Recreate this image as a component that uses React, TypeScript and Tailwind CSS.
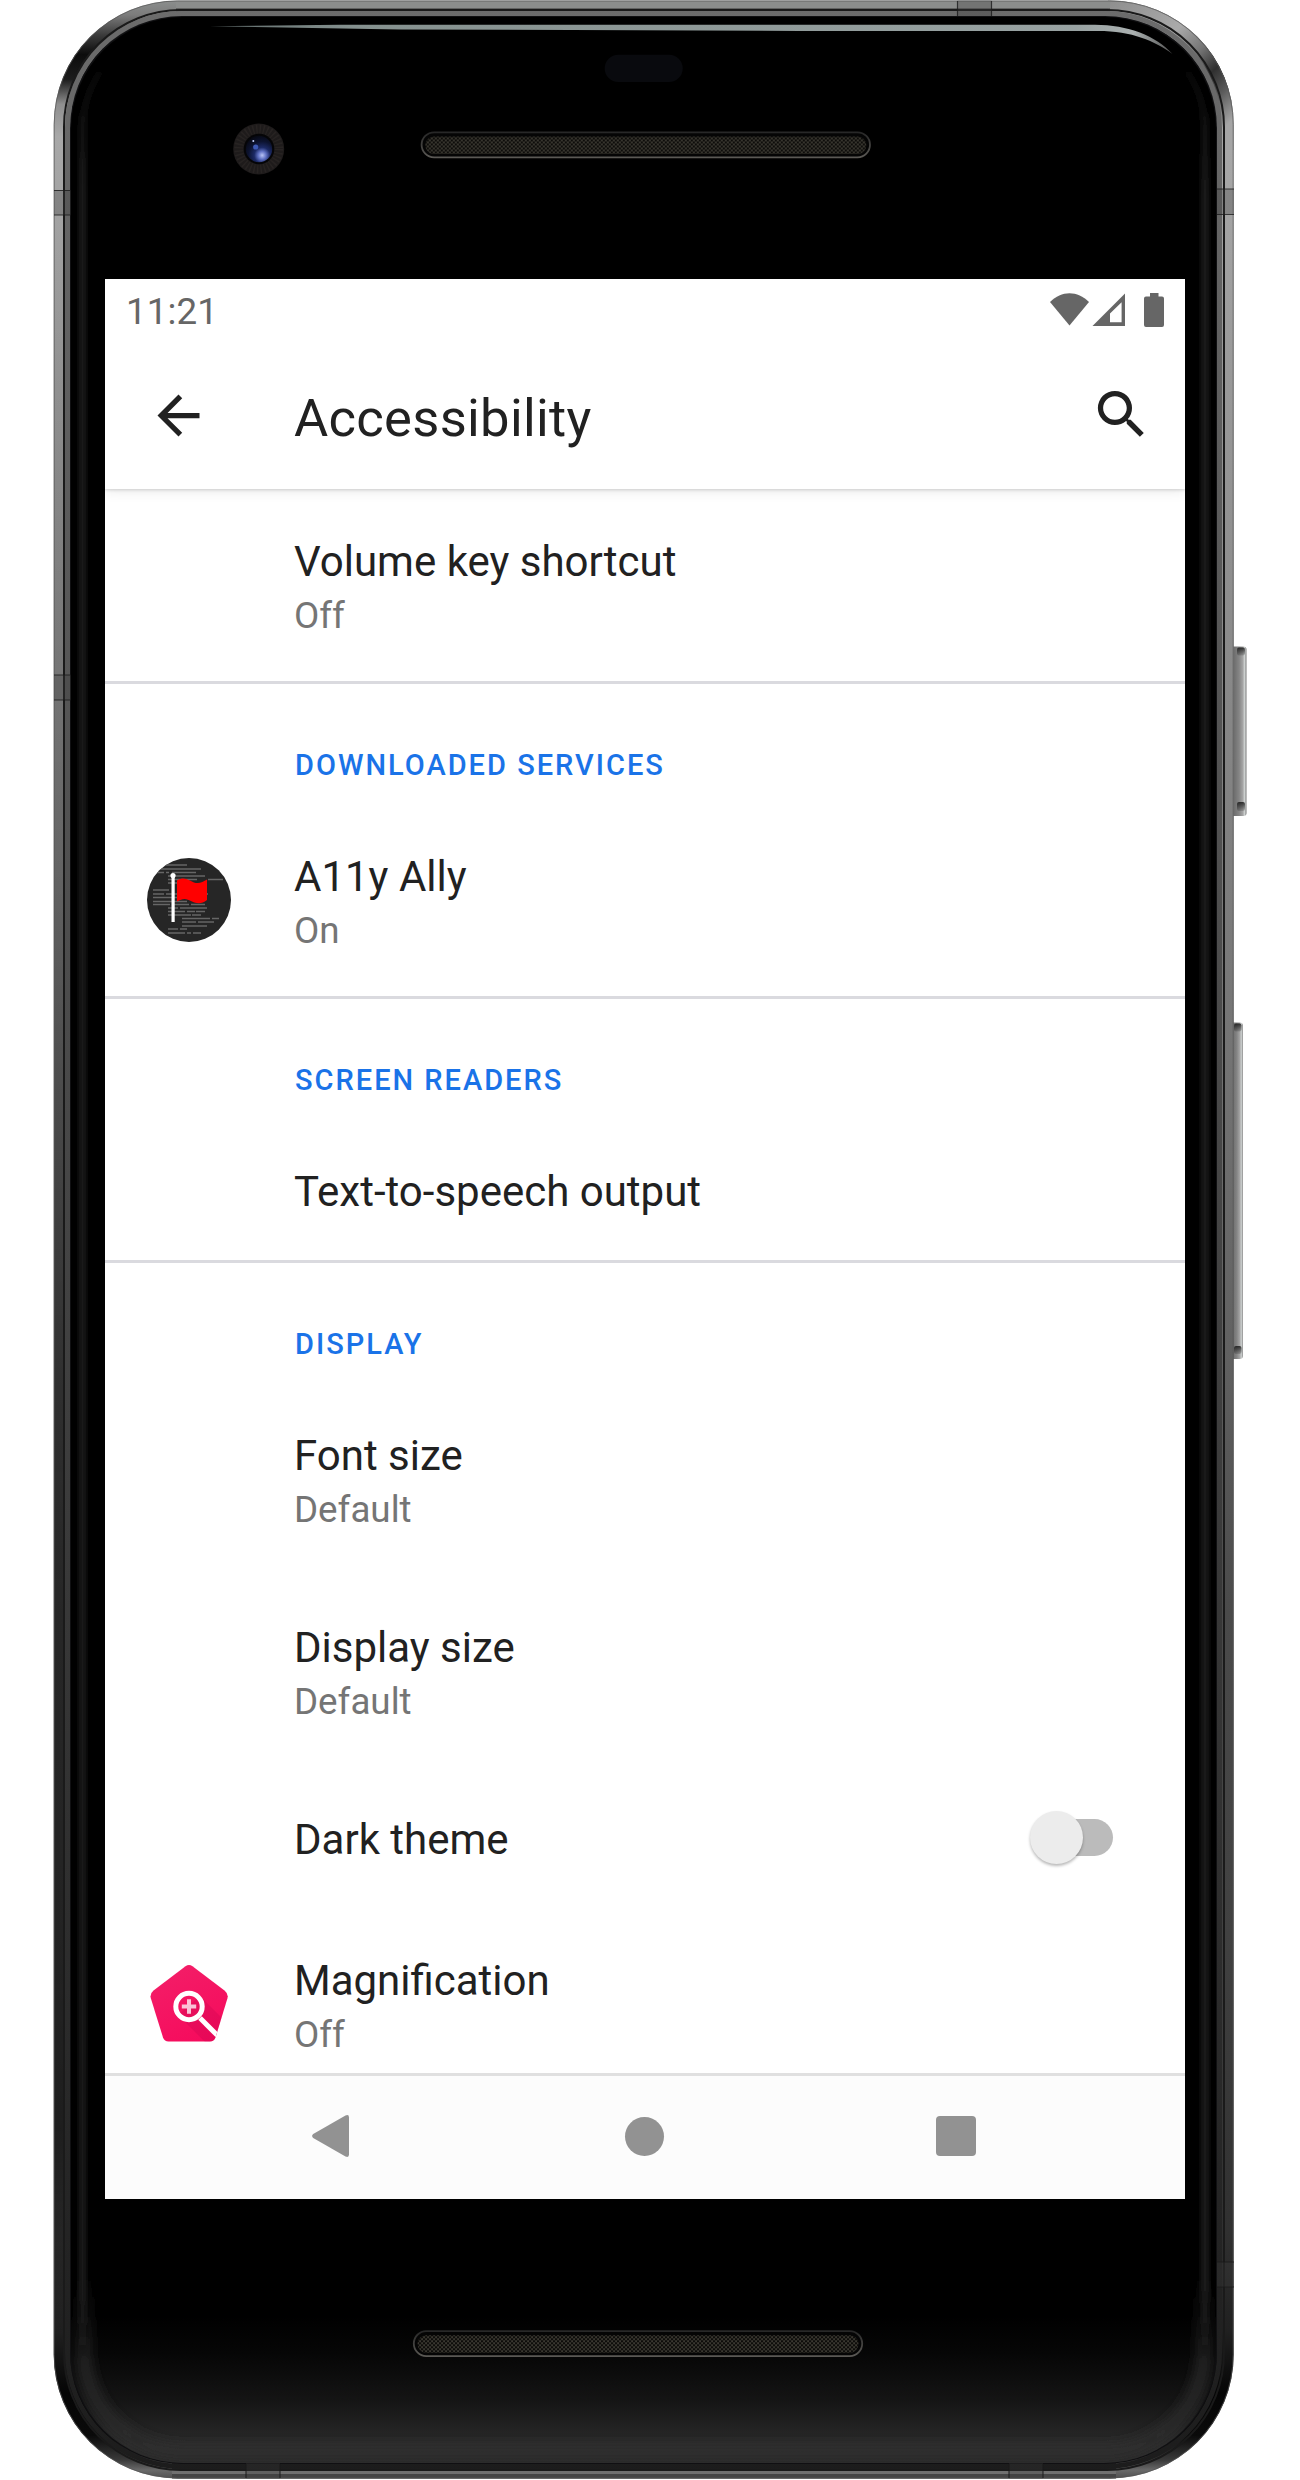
import React from "react";

const FONT = "font-[Roboto,'Liberation_Sans',sans-serif]";

function SpeakerGrille({ x, y }: { x: number; y: number }) {
  return (
    <g transform={`translate(${x} ${y})`}>
      <rect x="0.8" y="0.8" width="448.4" height="25" rx="12.5" fill="#050505" stroke="url(#grilleRim)" strokeWidth="1.8" />
      <rect x="4.5" y="5" width="441" height="17.5" rx="8.7" fill="url(#mesh)" />
    </g>
  );
}

function PhoneFrame() {
  return (
    <svg className="absolute inset-0" width="1300" height="2480" viewBox="0 0 1300 2480" aria-hidden="true">
      <defs>
        <linearGradient id="sideMetal" x1="0" y1="0" x2="0" y2="2480" gradientUnits="userSpaceOnUse">
          <stop offset="0" stopColor="#8c8f8e" />
          <stop offset="0.006" stopColor="#7c7c7c" />
          <stop offset="0.014" stopColor="#3c3c3c" />
          <stop offset="0.022" stopColor="#0c0c0c" />
          <stop offset="0.032" stopColor="#1c1c1c" />
          <stop offset="0.042" stopColor="#8f8f8f" />
          <stop offset="0.055" stopColor="#a8a8a8" />
          <stop offset="0.15" stopColor="#999" />
          <stop offset="0.3" stopColor="#858585" />
          <stop offset="0.45" stopColor="#707070" />
          <stop offset="0.55" stopColor="#606060" />
          <stop offset="0.65" stopColor="#4a4a4a" />
          <stop offset="0.78" stopColor="#414141" />
          <stop offset="0.9" stopColor="#303030" />
          <stop offset="0.94" stopColor="#202020" />
          <stop offset="0.965" stopColor="#050505" />
          <stop offset="0.982" stopColor="#0a0a0a" />
          <stop offset="0.992" stopColor="#3a3a3a" />
          <stop offset="0.996" stopColor="#6a6a6a" />
          <stop offset="1" stopColor="#4b4b4b" />
        </linearGradient>
        <linearGradient id="leftShade" x1="0" y1="220" x2="0" y2="2340" gradientUnits="userSpaceOnUse">
          <stop offset="0" stopColor="#000" stopOpacity="0" />
          <stop offset="0.3" stopColor="#000" stopOpacity="0.2" />
          <stop offset="0.55" stopColor="#000" stopOpacity="0.5" />
          <stop offset="0.9" stopColor="#000" stopOpacity="0.45" />
          <stop offset="1" stopColor="#000" stopOpacity="0" />
        </linearGradient>
        <linearGradient id="rightCorner" x1="1110" y1="0" x2="1232" y2="120" gradientUnits="userSpaceOnUse">
          <stop offset="0" stopColor="#8e8e8e" />
          <stop offset="0.4" stopColor="#aaaaaa" />
          <stop offset="0.58" stopColor="#757575" />
          <stop offset="0.72" stopColor="#303030" />
          <stop offset="0.85" stopColor="#5c5c5c" />
          <stop offset="1" stopColor="#a5a5a5" />
        </linearGradient>
        <linearGradient id="innerRim" x1="0" y1="0" x2="0" y2="2480" gradientUnits="userSpaceOnUse">
          <stop offset="0" stopColor="#6c6c6c" />
          <stop offset="0.25" stopColor="#585858" />
          <stop offset="0.5" stopColor="#444" />
          <stop offset="0.75" stopColor="#303030" />
          <stop offset="1" stopColor="#1c1c1c" />
        </linearGradient>
        <linearGradient id="glass" x1="0" y1="17" x2="0" y2="2463" gradientUnits="userSpaceOnUse">
          <stop offset="0" stopColor="#000" />
          <stop offset="0.94" stopColor="#000" />
          <stop offset="0.955" stopColor="#060606" />
          <stop offset="0.975" stopColor="#151515" />
          <stop offset="0.993" stopColor="#2b2b2b" />
          <stop offset="1" stopColor="#292929" />
        </linearGradient>
        <linearGradient id="sheenFade" x1="0" y1="0" x2="0" y2="2480" gradientUnits="userSpaceOnUse">
          <stop offset="0.02" stopColor="#1f1f1f" stopOpacity="0" />
          <stop offset="0.08" stopColor="#1f1f1f" />
          <stop offset="0.92" stopColor="#1f1f1f" />
          <stop offset="0.95" stopColor="#1f1f1f" stopOpacity="0" />
        </linearGradient>
        <linearGradient id="footGlow" x1="0" y1="2270" x2="0" y2="2452" gradientUnits="userSpaceOnUse">
          <stop offset="0" stopColor="#2d2d2d" stopOpacity="0" />
          <stop offset="0.5" stopColor="#2d2d2d" stopOpacity="0.7" />
          <stop offset="1" stopColor="#2d2d2d" stopOpacity="0.85" />
        </linearGradient>
        <linearGradient id="topGlint" x1="210" y1="0" x2="1172" y2="0" gradientUnits="userSpaceOnUse">
          <stop offset="0" stopColor="#5f6b6b" />
          <stop offset="0.15" stopColor="#85918f" />
          <stop offset="0.9" stopColor="#98a2a2" />
          <stop offset="0.96" stopColor="#aab0b0" />
          <stop offset="1" stopColor="#555" />
        </linearGradient>
        <linearGradient id="grilleRim" x1="0" y1="0" x2="0" y2="1">
          <stop offset="0" stopColor="#272727" />
          <stop offset="1" stopColor="#5b5955" />
        </linearGradient>
        <pattern id="mesh" width="4" height="4" patternUnits="userSpaceOnUse">
          <rect width="4" height="4" fill="#0d0c0a" />
          <rect x="0.3" y="0.2" width="1.5" height="1.5" fill="#5a564c" />
          <rect x="2.3" y="2.2" width="1.5" height="1.5" fill="#5a564c" />
        </pattern>
        <linearGradient id="keyMetal" x1="0" y1="0" x2="1" y2="0">
          <stop offset="0" stopColor="#666" />
          <stop offset="0.35" stopColor="#707070" />
          <stop offset="0.6" stopColor="#858585" />
          <stop offset="0.8" stopColor="#a5a5a5" />
          <stop offset="0.9" stopColor="#d0d4d3" />
          <stop offset="1" stopColor="#777" />
        </linearGradient>
        <linearGradient id="keyEnds" x1="0" y1="0" x2="0" y2="1">
          <stop offset="0" stopColor="#111" stopOpacity="0.8" />
          <stop offset="1" stopColor="#111" stopOpacity="0.15" />
        </linearGradient>
        <radialGradient id="lens" cx="0.62" cy="0.74" r="0.75">
          <stop offset="0" stopColor="#b9c4f5" />
          <stop offset="0.2" stopColor="#6172c4" />
          <stop offset="0.4" stopColor="#1c2a66" />
          <stop offset="0.7" stopColor="#0c1330" />
          <stop offset="1" stopColor="#070914" />
        </radialGradient>
        <filter id="soft" x="-10%" y="-10%" width="120%" height="120%">
          <feGaussianBlur stdDeviation="6" />
        </filter>
        <filter id="sheenSoft" x="-2%" y="-2%" width="104%" height="104%">
          <feGaussianBlur stdDeviation="2.5" />
        </filter>
        <clipPath id="glassClip">
          <rect x="71" y="17" width="1145" height="2446" rx="112" />
        </clipPath>
      </defs>

      {/* side keys */}
      <rect x="1228" y="646.5" width="18.5" height="169.5" rx="3" fill="url(#keyMetal)" />
      <rect x="1237" y="647.500" width="8" height="8" rx="2" fill="url(#keyEnds)" />
      <rect x="1237" y="802" width="8" height="9" rx="2" fill="url(#keyEnds)" />
      <rect x="1228" y="1022.5" width="14.8" height="336.5" rx="3" fill="url(#keyMetal)" />
      <rect x="1234" y="1023.500" width="7.500" height="8" rx="2" fill="url(#keyEnds)" />
      <rect x="1234" y="1346" width="7.500" height="8" rx="2" fill="url(#keyEnds)" />

      {/* metal body */}
      <rect x="53.7" y="0.5" width="1180" height="2478" rx="124" fill="url(#sideMetal)" />
      <path d="M1108 0.5H1109.7A124 124 0 0 1 1233.7 124.5V150H1216V126A110 110 0 0 0 1106 16H1108Z" fill="url(#rightCorner)" />
      <path d="M54 215H71V2340H54Z" fill="url(#leftShade)" />
      <rect x="176" y="1.5" width="934" height="7" fill="#8b8d8c" />
      <rect x="176" y="8.5" width="934" height="3" fill="#3a3a3a" />
      <rect x="172" y="2463" width="944" height="7" fill="#222" />
      <rect x="172" y="2470" width="944" height="4" fill="#707070" />
      <rect x="172" y="2474" width="944" height="4.5" fill="#454545" />
      <rect x="54.2" y="1" width="1179" height="2477" rx="123.5" fill="none" stroke="#555" strokeOpacity="0.7" strokeWidth="1" />
      <rect x="64" y="10" width="1160" height="2460" rx="117" fill="none" stroke="#1a1a1a" strokeWidth="2" />
      <rect x="67.5" y="13.5" width="1152" height="2453" rx="114" fill="none" stroke="url(#innerRim)" strokeWidth="5" />
      <rect x="70" y="16" width="1147" height="2448" rx="112" fill="#101012" />

      {/* antenna bands */}
      <g fill="#3a3a3a" fillOpacity="0.3">
        <rect x="54" y="190" width="17" height="25" />
        <rect x="54" y="675" width="17" height="25" />
        <rect x="1217" y="189" width="17" height="25" />
        <rect x="1217" y="2262" width="17" height="25" />
        <rect x="957.5" y="0.5" width="34" height="15.5" />
        <rect x="246" y="2463" width="34" height="15.5" />
        <rect x="1009" y="2463" width="34" height="15.5" />
      </g>
      <path
        d="M54 190.5H71M54 215H71M54 675H71M54 700H71M1217 189H1234M1217 214.5H1234M1217 2262H1234M1217 2287H1234M957.5 1V16M991.5 1V16M246 2464V2478M280 2464V2478M1009 2464V2478M1043 2464V2478"
        stroke="#1a1a1a"
        strokeOpacity="0.8"
        strokeWidth="1.2"
        fill="none"
      />

      {/* front glass */}
      <rect x="71" y="17" width="1145" height="2446" rx="112" fill="url(#glass)" />
      <g clipPath="url(#glassClip)">
        <path d="M84 2270V2350A100 100 0 0 0 184 2452H1103A100 100 0 0 0 1204 2350V2270" fill="none" stroke="url(#footGlow)" strokeWidth="15" filter="url(#soft)" />
        <rect x="82.5" y="28" width="1122.500" height="2424" rx="101" fill="none" stroke="url(#sheenFade)" strokeWidth="7" filter="url(#sheenSoft)" />
      </g>
      <path d="M210 26.3L340 24.8H1095C1128 24.8 1156 36 1172.5 54C1155 41 1132 31 1098 31H800L400 29.4Z" fill="url(#topGlint)" />

      {/* camera, sensor, speakers */}
      <circle cx="258.7" cy="149" r="25.5" fill="#1e1b1b" />
      <circle cx="258.7" cy="149" r="20" fill="none" stroke="#272322" strokeWidth="9" strokeDasharray="1.5 2" />
      <circle cx="259" cy="149" r="15.3" fill="#050507" />
      <circle cx="259" cy="149" r="13.2" fill="url(#lens)" />
      <circle cx="255.7" cy="147" r="2.6" fill="#3d59b5" />
      <circle cx="253.3" cy="141" r="1" fill="#c7d2ff" />
      <rect x="604.7" y="54.8" width="78" height="27.2" rx="13.6" fill="#090a0e" />
      <SpeakerGrille x={420.8} y={131.5} />
      <SpeakerGrille x={413} y={2330.3} />
    </svg>
  );
}

function StatusBar() {
  return (
    <div className="relative z-20 flex h-[63px] shrink-0 items-center justify-between bg-white pl-[21px] pr-[20px] text-[#666]">
      <span className="pt-[4px] text-[36.750px] leading-none tracking-[0.1px]">11:21</span>
      <svg className="mb-[3px]" width="117" height="36" viewBox="1048 291 117 36" fill="currentColor" aria-hidden="true">
        <path d="M1050 302C1061.500 290.200 1077.500 290.200 1089 302L1069.500 325.500Z" />
        <path fillRule="evenodd" d="M1092.500 326L1125 293.500V326ZM1110 322.200H1121.600V302.200L1110 313.500Z" />
        <path d="M1150 293H1158.500V296.500H1162Q1164 296.500 1164 298.500V325Q1164 327 1162 327H1146Q1144 327 1144 325V298.500Q1144 296.500 1146 296.500H1150Z" />
      </svg>
    </div>
  );
}

function AppBar() {
  return (
    <header className="relative z-10 flex h-[147px] shrink-0 items-center bg-white pl-[42px] pr-[32px] text-[#212121] shadow-[0_1px_3px_rgba(0,0,0,0.16),0_3px_12px_rgba(0,0,0,0.08)]">
      <svg width="63" height="63" viewBox="0 0 24 24" fill="currentColor" aria-label="Back">
        <path d="M20 11H7.830l5.590-5.590L12 4l-8 8 8 8 1.410-1.410L7.830 13H20v-2z" />
      </svg>
      <h1 className="ml-[84px] flex-1 pt-[5px] text-[52.500px] leading-none tracking-[0.3px]">Accessibility</h1>
      <svg className="mb-[2px]" width="63" height="63" viewBox="0 0 24 24" fill="currentColor" aria-label="Search">
        <path d="M15.500 14h-.79l-.28-.27A6.471 6.471 0 0 0 16 9.500 6.500 6.500 0 1 0 9.500 16c1.610 0 3.090-.59 4.230-1.570l.27.28v.79l5 4.990L20.490 19l-4.990-5zm-6 0C7.010 14 5 11.990 5 9.500S7.010 5 9.500 5 14 7.010 14 9.500 11.990 14 9.500 14z" />
      </svg>
    </header>
  );
}

function AllyIcon() {
  return (
    <svg width="84" height="84" viewBox="0 0 84 84" aria-hidden="true">
      <defs>
        <clipPath id="allyClip">
          <circle cx="42" cy="42" r="42" />
        </clipPath>
      </defs>
      <circle cx="42" cy="42" r="42" fill="#262626" />
      <g clipPath="url(#allyClip)">
        <path
          d="M14 7H40M12 11H54M10 14.500H17M19 14.500H22M25 14.500H49M21 18H58M21 21.500H50M61 21.500H76M21 25H30M6 32H22M6 36H17M19 36H30M6 39.500H44M6 43.500H40M6 46.500H23M26 46.500H42M44 46.500H58M50 36H61M21 50H31M33 50H60M21 53.500H38M40 53.500H48M49 53.500H58M21 57H44M45 57H54M35 60.500H63M65 60.500H72M35 64H49M51 64H67M35 68H60M21 71H31M33 71H40M21 75H38M40 75H44M46 75H54"
          stroke="#666"
          strokeWidth="1.7"
          fill="none"
        />
        <path d="M30 22.500C37 18 42 22 47 24.500C52 26 56 24 60 21.500V42C55 46 50 46 45 43.500C39 40 36 40 30 43.500Z" fill="#f00" />
        <rect x="24.500" y="17" width="3.200" height="47" fill="#fff" />
        <circle cx="26" cy="17.500" r="2.600" fill="#fff" />
      </g>
    </svg>
  );
}

function MagnificationIcon() {
  return (
    <svg width="84" height="84" viewBox="0 0 84 84" aria-hidden="true">
      <defs>
        <linearGradient id="magPink" x1="0.2" y1="0" x2="0.7" y2="1">
          <stop offset="0" stopColor="#f31f68" />
          <stop offset="1" stopColor="#f60a5c" />
        </linearGradient>
        <clipPath id="magClip">
          <path d="M38.500 4.200Q42 1.800 45.500 4.200L77.500 28.500Q81.700 31.800 80.400 36.500L68.500 75.500Q67 79.500 63 79.500H21.500Q17.500 79.500 16 75.500L3.900 36.500Q2.500 31.800 6.500 28.500Z" />
        </clipPath>
      </defs>
      <g clipPath="url(#magClip)">
        <rect width="84" height="84" fill="url(#magPink)" />
        <path d="M53 34L84 65V84H62L31 53Z" fill="#b8004a" fillOpacity="0.22" />
        <circle cx="42" cy="44.500" r="13.200" fill="none" stroke="#fff" strokeWidth="5" />
        <path d="M53 56L71 74" stroke="#fff" strokeWidth="5" />
        <path d="M42 37.300V51.700M34.800 44.500H49.200" stroke="#fff" strokeOpacity="0.75" strokeWidth="4" />
      </g>
    </svg>
  );
}

function Switch() {
  return (
    <div className="relative mb-[2px] mr-[72px] h-[54px] w-[84px]" role="switch" aria-checked="false">
      <div className="absolute right-0 top-[9px] h-[37px] w-[72px] rounded-full bg-[#bbb]" />
      <div className="absolute left-[1px] top-px size-[53px] rounded-full bg-[#ececec] shadow-[0_2px_3px_rgba(0,0,0,0.28)]" />
    </div>
  );
}

type RowProps = { title: string; summary?: string; icon?: React.ReactNode; control?: React.ReactNode };

function Row({ title, summary, icon, control }: RowProps) {
  return (
    <div className={summary ? "flex h-[192px] shrink-0 items-center" : "flex h-[141px] shrink-0 items-center"}>
      <div className="flex w-[189px] shrink-0 pl-[42px]">{icon}</div>
      <div className={summary ? "flex-1 pt-[5px]" : "flex-1 pt-[4px]"}>
        <div className="text-[42px] leading-[56px] text-[#212121]">{title}</div>
        {summary && <div className="text-[36.750px] leading-[51px] text-[#757575]">{summary}</div>}
      </div>
      {control}
    </div>
  );
}

function Section({ label, children }: { label: string; children: React.ReactNode }) {
  return (
    <section className="shrink-0 border-t-[3px] border-[#dadadf]">
      <h2 className="flex h-[120px] items-center pl-[190px] pt-[42px] text-[29px] font-medium leading-none tracking-[2px] text-[#1a73e8]">
        {label}
      </h2>
      {children}
    </section>
  );
}

function NavBar() {
  return (
    <nav className="relative z-10 flex h-[126px] shrink-0 items-center justify-between border-t-[3px] border-[#e0e0e0] bg-[#fcfcfc] pb-[3px] pl-[206px] pr-[209px] text-[#929292]">
      <svg width="40" height="44" viewBox="0 0 40 44" fill="currentColor" aria-label="Back">
        <path d="M2.200 20Q0 22 2.200 24L34.500 42.500Q38 44 38 40.500V3.500Q38 0 34.500 1.500Z" />
      </svg>
      <div className="ml-[2px] size-[39px] rounded-full bg-[#929292]" />
      <div className="size-[40px] rounded-[4px] bg-[#929292]" />
    </nav>
  );
}

export default function App() {
  return (
    <div className={`relative h-[2480px] w-[1300px] overflow-hidden bg-white pl-[105px] pt-[279px] ${FONT}`}>
      <PhoneFrame />
      <main className="relative flex h-[1920px] w-[1080px] flex-col overflow-hidden bg-white">
        <StatusBar />
        <AppBar />
        <div className="flex min-h-0 flex-1 flex-col overflow-hidden">
          <Row title="Volume key shortcut" summary="Off" />
          <Section label="DOWNLOADED SERVICES">
            <Row title="A11y Ally" summary="On" icon={<AllyIcon />} />
          </Section>
          <Section label="SCREEN READERS">
            <Row title="Text-to-speech output" />
          </Section>
          <Section label="DISPLAY">
            <Row title="Font size" summary="Default" />
            <Row title="Display size" summary="Default" />
            <Row title="Dark theme" control={<Switch />} />
            <Row title="Magnification" summary="Off" icon={<MagnificationIcon />} />
          </Section>
        </div>
        <NavBar />
      </main>
    </div>
  );
}
